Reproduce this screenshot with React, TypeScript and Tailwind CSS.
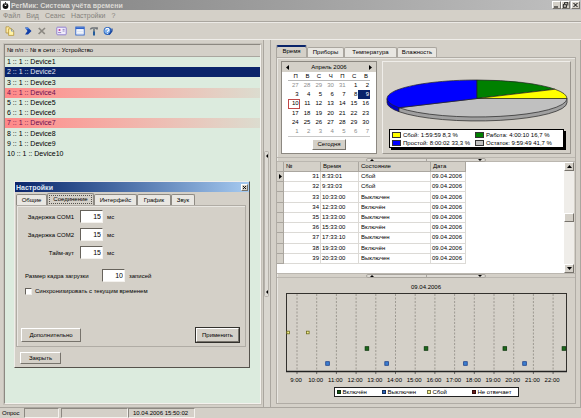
import React, { useState } from "react";

const devices = Array.from({ length: 10 }, (_, i) => i + 1);

const records = [
  [31, "8:33:01", "Сбой"],
  [32, "9:33:03", "Сбой"],
  [33, "10:33:00", "Выключен"],
  [34, "12:33:00", "Включён"],
  [35, "13:33:00", "Выключен"],
  [36, "15:33:00", "Включён"],
  [37, "17:33:10", "Выключен"],
  [38, "19:33:00", "Включён"],
  [39, "20:33:00", "Выключен"],
];

const days = [27, 28, 29, 30, 31, ...Array.from({ length: 30 }, (_, i) => i + 1), 1, 2, 3, 4, 5, 6, 7];

const raised = "border border-t-white border-l-white border-r-[#77736c] border-b-[#77736c] bg-[#d4d0c8]";
const sunken = "border border-t-[#8c8881] border-l-[#8c8881] border-r-[#f4f2ee] border-b-[#f4f2ee]";
const etched = "border border-[#b0aca5] shadow-[inset_1px_1px_0_#e9e7e2]";

function TitleBar() {
  return (
    <header className="flex h-[10px] shrink-0 items-center bg-linear-to-r from-[#808080] to-[#c0c0c0] pr-px pl-px">
      <svg className="h-[9px] w-[9px]" viewBox="0 0 9 9">
        <rect width="9" height="9" fill="#fff" />
        <circle cx="4.5" cy="5" r="2.9" fill="#111" />
        <path d="M4.5 1v4" stroke="#fff" strokeWidth="1.6" />
        <path d="M4.5 1v3" stroke="#111" strokeWidth=".8" />
      </svg>
      <h1 className="ml-px flex-1 text-[7px] leading-[9px] font-bold whitespace-nowrap text-[#dcdad5]">
        РегМик: Система учёта времени
      </h1>
      <div className="flex">
        <button aria-label="Свернуть" className={`h-[8px] w-[9px] ${raised}`}>
          <svg className="h-full w-full" viewBox="0 0 7 6"><path d="M1 5h4" stroke="#000" /></svg>
        </button>
        <button aria-label="Восстановить" className={`h-[8px] w-[9px] ${raised}`}>
          <svg className="h-full w-full" viewBox="0 0 7 6"><path d="M2.5 .7h3.5M2.5 .5v1.5M5.8 .5v3M1 2.7h3.6M1.3 2.5v3M1 5.3h3.6M4.4 2.5v3" fill="none" stroke="#000" strokeWidth=".8" /></svg>
        </button>
        <button aria-label="Закрыть окно" className={`ml-px h-[8px] w-[9px] ${raised}`}>
          <svg className="h-full w-full" viewBox="0 0 7 6"><path d="M1.5 1l4 4M5.5 1l-4 4" stroke="#000" /></svg>
        </button>
      </div>
    </header>
  );
}

function Toolbar() {
  return (
    <div className="flex h-[18px] shrink-0 items-center border-t border-t-[#aaa69f] pl-[5px] shadow-[inset_0_1px_0_#eceae6]">
      <button aria-label="Копировать">
        <svg className="h-[10px] w-[10px]" viewBox="0 0 10 10">
          <path d="M1 .8h3l2 2V7H1z" fill="#ffe9a0" stroke="#a88b35" strokeWidth=".7" />
          <path d="M3.6 2.8h3.1l2 2v4.6H3.6z" fill="#fff3a8" stroke="#b08d2a" strokeWidth=".7" />
          <path d="M6.5 2.8v2.3h2.2" fill="none" stroke="#5a7bbf" strokeWidth=".7" />
        </svg>
      </button>
      <button aria-label="Опрос" className="ml-[8px]">
        <svg className="h-[10px] w-[10px]" viewBox="0 0 10 10">
          <path d="M2 1.5h3L8.5 5 5 8.5H2L4.5 5z" fill="#123fa8" />
          <path d="M2 1.7h3L6.4 3.2H3.3z" fill="#4d86e8" />
        </svg>
      </button>
      <button aria-label="Стоп" className="ml-[4px]">
        <svg className="h-[10px] w-[10px]" viewBox="0 0 10 10">
          <path d="M1.8 2l6 6M8 2L1.6 8" stroke="#8b8882" strokeWidth="1.7" />
        </svg>
      </button>
      <button aria-label="Карточка" className="ml-[9px]">
        <svg className="h-[10px] w-[11px]" viewBox="0 0 11 10">
          <rect x=".8" y="1.2" width="9.4" height="7.6" rx=".8" fill="#f1edfb" stroke="#8a77cf" strokeWidth=".9" />
          <circle cx="3.5" cy="4" r="1.1" fill="#c23c8e" />
          <path d="M2 6.6h3.2M6.6 3.4h2M6.6 5h2" stroke="#7d71b8" strokeWidth=".8" />
        </svg>
      </button>
      <button aria-label="Окно" className="ml-[8px]">
        <svg className="h-[10px] w-[10px]" viewBox="0 0 10 10">
          <rect x=".8" y="1" width="8.4" height="8" fill="#fff" stroke="#2d62c9" strokeWidth=".9" />
          <path d="M.8 2.2h8.4" stroke="#2d62c9" strokeWidth="1.8" />
          <path d="M2.5 5.2h1M4.5 5.2h1M6.5 5.2h1M2.5 7.2h1M4.5 7.2h1M6.5 7.2h1" stroke="#8eaadf" strokeWidth=".8" />
        </svg>
      </button>
      <button aria-label="Сервис" className="ml-[4px]">
        <svg className="h-[10px] w-[10px]" viewBox="0 0 10 10">
          <path d="M.8 3.6C1.2 1.6 2.6 1 4 1.3h4.9v2.2H7.3L6.4 2.8H3.5L2 3.6z" fill="#6f7479" />
          <path d="M5 3v3" stroke="#48606e" strokeWidth="1.3" />
          <path d="M5 5.5V9.4" stroke="#245c9c" strokeWidth="2" />
        </svg>
      </button>
      <button aria-label="Справка" className="ml-[4px]">
        <svg className="h-[10px] w-[10px]" viewBox="0 0 10 10">
          <circle cx="4.6" cy="5" r="4" fill="#2660bd" />
          <circle cx="4.2" cy="4.8" r="2.9" fill="#7fb0ec" />
          <path d="M2.8 3.8c0-2 3.2-1.8 3.2-.1 0 1.1-1.5 1.1-1.5 2.2M4.5 6.9v.9" fill="none" stroke="#fff" strokeWidth="1.1" />
          <path d="M6 8.5L9 5V2.5" fill="none" stroke="#1d479b" strokeWidth="1.2" />
        </svg>
      </button>
    </div>
  );
}

function DeviceList() {
  const [selected, setSelected] = useState(2);
  return (
    <section className="flex w-[264px] shrink-0 border-r border-r-[#aaa69f] p-[4px] pr-[2px] pb-[3px]">
      <div className={`flex flex-1 flex-col bg-[#dcebde] ${sunken} shadow-[0_0_0_1px_#c4c0b8]`}>
        <div className="h-[12px] border-b border-b-[#aaa69f] bg-[#d4d0c8] pl-[2px] leading-[11px]">
          № п/п :: № в сети :: Устройство
        </div>
        <div className="flex h-[102px] flex-col">
          {devices.map((n) => (
            <button
              key={n}
              onClick={() => setSelected(n)}
              className={`flex min-h-0 flex-1 items-center pl-[2px] text-left text-[7px] leading-[10px] whitespace-nowrap ${
                n === selected
                  ? "bg-[#0a246a] text-[#e3e8f2]"
                  : n === 4 || n === 7
                    ? "bg-linear-to-r from-[#ff8888] to-[#dcdccf] text-[#6b0f50]"
                    : "text-black"
              }`}
            >
              {n} :: 1 :: Device{n}
            </button>
          ))}
        </div>
      </div>
    </section>
  );
}

function Calendar() {
  return (
    <section className="flex w-[96px] shrink-0 flex-col border border-[#8c8881] bg-white">
      <div className="flex h-[10px] items-center justify-between bg-[#d4d0c8] px-[4px] leading-[10px]">
        <button aria-label="Предыдущий месяц"><svg className="h-[5px] w-[3px]" viewBox="0 0 3 5"><path d="M3 0v5L0 2.5z" /></svg></button>
        <span>Апрель 2006</span>
        <button aria-label="Следующий месяц"><svg className="h-[5px] w-[3px]" viewBox="0 0 3 5"><path d="M0 0v5l3-2.5z" /></svg></button>
      </div>
      <div className="mx-[6px] grid h-[9px] grid-cols-7 border-b border-b-[#b9b9b9] text-right leading-[9px]">
        {["П", "В", "С", "Ч", "П", "С", "В"].map((d, i) => (
          <span key={i} className="pr-[2px]">{d}</span>
        ))}
      </div>
      <div className="mx-[6px] grid h-[56px] grid-cols-7 grid-rows-6 border-b border-b-[#c9c9c9] leading-[9px]">
        {days.map((d, i) => (
          <button
            key={i}
            className={`flex min-h-0 items-center justify-end ${
              i === 13
                ? "bg-[#0a246a] pr-px text-white"
                : i === 14
                  ? "border border-[#c04848]"
                  : i < 5 || i > 34
                    ? "pr-px text-[#8c8c8c]"
                    : "pr-px"
            }`}
          >
            {d}
          </button>
        ))}
      </div>
      <button className={`mx-auto mt-[2px] h-[11px] w-[34px] leading-[9px] ${raised}`}>Сегодня</button>
    </section>
  );
}

function PiePanel() {
  const legend: [string, string][] = [
    ["bg-[#ffff00]", "Сбой: 1:59:59 8,3 %"],
    ["bg-[#008000]", "Работа: 4:00:10 16,7 %"],
    ["bg-[#0000ff]", "Простой: 8:00:02 33,3 %"],
    ["bg-[#c0c0c0]", "Остаток: 9:59:49 41,7 %"],
  ];
  return (
    <section className="flex min-w-0 flex-1 flex-col items-center border border-t-[#efede9] border-l-[#efede9] border-r-[#9a968f] border-b-[#9a968f] pt-[16px]">
      <svg className="h-[45px] w-[182px]" viewBox="385 78 182 45">
        <g stroke="#222" strokeWidth=".7">
          <path d="M386 98.5V102.5A90 18.5 0 0 0 398 111.7V107.7z" fill="#0000c8" />
          <path d="M398 107.7V111.7A90 18.5 0 0 0 566 102.5V98.5z" fill="#a0a0a0" />
          <path d="M476 98.5L398 107.7A90 18.5 0 0 0 566 98.5z" fill="#c0c0c0" />
          <path d="M476 98.5L398 107.7A90 18.5 0 0 1 476 80z" fill="#0000ff" />
          <path d="M476 98.5V80A90 18.5 0 0 1 554 89.25z" fill="#008000" />
          <path d="M476 98.5L554 89.25A90 18.5 0 0 1 566 98.5z" fill="#ffff00" />
        </g>
      </svg>
      <ul className="mt-[6px] grid h-[19px] grid-cols-[82px_86px] content-center gap-x-px border border-black bg-white px-[2px] leading-[8px] whitespace-nowrap shadow-[2px_2px_0_#000]">
        {legend.map(([color, label]) => (
          <li key={label} className="flex items-center gap-[2px]">
            <span className={`h-[6px] w-[9px] shrink-0 border border-[#333] ${color}`} />
            {label}
          </li>
        ))}
      </ul>
    </section>
  );
}

function Splitter() {
  return (
    <div className="flex h-[5px] shrink-0 items-center border-y border-y-[#bbb7b0]">
      <div className="mx-auto flex h-[4px] w-[120px] items-center justify-between rounded-[2px] border border-[#a9a59e] bg-[#dedbd5] px-[3px]">
        <svg className="h-[2px] w-[4px]" viewBox="0 0 4 2"><path d="M0 2h4L2 0z" /></svg>
        <span className="h-[3px] w-px bg-[#a9a59e]" />
        <svg className="h-[2px] w-[4px]" viewBox="0 0 4 2"><path d="M0 0h4L2 2z" /></svg>
      </div>
    </div>
  );
}

function Records() {
  const head = "border-r border-b border-[#aaa69f] bg-[#d4d0c8] p-0 text-left font-normal";
  const cell = "border-r border-b border-[#dcdad6] p-0";
  return (
    <section className="mr-px flex h-[111px] shrink-0 bg-white">
      <div className="min-w-0 flex-1">
        <table className="h-[102px] w-[189px] table-fixed border-separate border-spacing-0 leading-[9px] whitespace-nowrap">
          <colgroup>
            <col className="w-[7px]" />
            <col className="w-[37px]" />
            <col className="w-[38px]" />
            <col className="w-[72px]" />
            <col className="w-[35px]" />
          </colgroup>
          <thead>
            <tr>
              <th className={head} aria-label="Текущая запись" />
              <th className={`${head} pl-[2px]`}>№</th>
              <th className={`${head} pl-[2px]`}>Время</th>
              <th className={`${head} pl-[2px]`}>Состояние</th>
              <th className={`${head} pl-[2px]`}>Дата</th>
            </tr>
          </thead>
          <tbody>
            {records.map(([n, time, state], i) => (
              <tr key={n}>
                <td className="border-r border-b border-[#aaa69f] bg-[#d4d0c8] p-0">
                  {i === 0 && <svg className="ml-[2px] block h-[5px] w-[3px]" viewBox="0 0 3 5"><path d="M0 0v5l3-2.5z" /></svg>}
                </td>
                <td className={`${cell} pr-px text-right`}>{n}</td>
                <td className={`${cell} pl-px`}>{time}</td>
                <td className={`${cell} pl-[2px]`}>{state}</td>
                <td className={`${cell} pl-px`}>09.04.2006</td>
              </tr>
            ))}
          </tbody>
        </table>
      </div>
      <div className="flex w-[10px] flex-col bg-[#efede9]">
        <button aria-label="Вверх" className={`flex h-[9px] items-center justify-center ${raised}`}>
          <svg className="h-[3px] w-[5px]" viewBox="0 0 5 3"><path d="M0 3h5L2.5 0z" /></svg>
        </button>
        <div className="flex flex-1 flex-col pt-[42px]"><div className={`h-[9px] ${raised}`} /></div>
        <button aria-label="Вниз" className={`flex h-[9px] items-center justify-center ${raised}`}>
          <svg className="h-[3px] w-[5px]" viewBox="0 0 5 3"><path d="M0 0h5L2.5 3z" /></svg>
        </button>
      </div>
    </section>
  );
}

const hourX = (h: number) => 20 + (h - 9) * 19.7;

function TimeChart() {
  const hours = Array.from({ length: 14 }, (_, i) => i + 9);
  const points: [number, number, string, string][] = [
    [8.55, 54.5, "#f4f08c", "#6d6a1c"],
    [9.55, 54.5, "#f4f08c", "#6d6a1c"],
    [12.55, 70.5, "#1c6a1c", "#0a360a"],
    [15.55, 70.5, "#1c6a1c", "#0a360a"],
    [19.55, 70.5, "#1c6a1c", "#0a360a"],
    [22.55, 70.5, "#1c6a1c", "#0a360a"],
    [10.55, 85.5, "#3c7fd0", "#1c3f8c"],
    [13.55, 85.5, "#3c7fd0", "#1c3f8c"],
    [17.55, 85.5, "#3c7fd0", "#1c3f8c"],
    [20.55, 85.5, "#3c7fd0", "#1c3f8c"],
  ];
  const legend: [string, string, string][] = [
    ["bg-[#145214]", "Включён", "w-[45px]"],
    ["bg-[#2c62b8]", "Выключен", "w-[45px]"],
    ["bg-[#f4f08c]", "Сбой", "w-[45px]"],
    ["bg-[#6a1c1c]", "Не отвечает", "w-[46px]"],
  ];
  return (
    <section className="flex min-h-0 flex-1 flex-col items-center">
      <svg className="w-full" viewBox="0 0 298 107" fontSize="6" textAnchor="middle">
        <text x="149" y="11">09.04.2006</text>
        {hours.map((h) => (
          <g key={h}>
            <path d={`M${hourX(h)} 16V93`} stroke="#8f8b84" strokeWidth=".8" strokeDasharray="2 1.5" />
            <path d={`M${hourX(h)} 93v3`} stroke="#333" strokeWidth=".7" />
            <text x={hourX(h) - 1} y="103.5">{h}:00</text>
          </g>
        ))}
        <rect x="9.5" y="15.5" width="280" height="78" fill="none" stroke="#33312d" />
        <path d="M9 93.5h281" stroke="#222" strokeWidth="1.3" />
        {points.map(([h, y, fill, stroke]) => {
          const size = fill === "#f4f08c" ? 2.6 : 3.6;
          return <rect key={h} x={hourX(h) - size / 2} y={y - size / 2} width={size} height={size} fill={fill} stroke={stroke} strokeWidth=".8" />;
        })}
      </svg>
      <ul className="mt-[2px] flex h-[10px] items-center border border-[#222] bg-white pl-[2px] leading-[8px] whitespace-nowrap">
        {legend.map(([color, label, width]) => (
          <li key={label} className={`flex items-center gap-[2px] ${width}`}>
            <span className={`h-[4px] w-[4px] shrink-0 border border-black/50 ${color}`} />
            {label}
          </li>
        ))}
      </ul>
    </section>
  );
}

function Workspace() {
  const tabs: [string, string][] = [
    ["Время", "w-[31px]"],
    ["Приборы", "w-[37px]"],
    ["Температура", "w-[53px]"],
    ["Влажность", "w-[40px]"],
  ];
  return (
    <main className="flex min-w-0 flex-1 flex-col border-x border-x-[#aaa69f] pt-[5px] pr-[4px] pb-[3px] pl-[5px]">
      <nav className="flex h-[12px] shrink-0 items-end leading-[9px]">
        {tabs.map(([label, width], i) => (
          <button
            key={label}
            className={`${width} rounded-t-[2px] border border-b-0 border-[#aaa69f] ${
              i === 0 ? "h-[12px] border-t-[#0a246a] bg-[#d4d0c8] shadow-[inset_0_1px_0_#0a246a]" : "h-[10px] bg-[#e9e7e2]"
            }`}
          >
            {label}
          </button>
        ))}
      </nav>
      <div className={`flex min-h-0 flex-1 flex-col ${etched}`}>
        <div className="flex h-[99px] shrink-0 gap-[5px] px-[4px] py-[3px]">
          <Calendar />
          <PiePanel />
        </div>
        <Splitter />
        <Records />
        <Splitter />
        <TimeChart />
      </div>
    </main>
  );
}

function SettingsDialog() {
  const tabs: [string, string][] = [
    ["Общие", "w-[31px]"],
    ["Соединение", "w-[47px]"],
    ["Интерфейс", "w-[43px]"],
    ["График", "w-[34px]"],
    ["Звук", "w-[24px]"],
  ];
  const fields: [string, string][] = [
    ["com1", "Задержка COM1"],
    ["com2", "Задержка COM2"],
    ["timeout", "Тайм-аут"],
  ];
  const input = `h-[13px] w-[23px] border border-t-[#66625b] border-l-[#66625b] border-r-[#f4f2ee] border-b-[#f4f2ee] bg-white pr-px text-right text-[7px] leading-[10px]`;
  return (
    <div
      role="dialog"
      aria-labelledby="settings-title"
      className="absolute top-[181px] left-[14px] flex w-[236px] flex-col border border-t-[#efede9] border-l-[#efede9] border-r-[#55524c] border-b-[#55524c] bg-[#d4d0c8] pb-[3px]"
    >
      <div className="flex h-[10px] items-center justify-between bg-linear-to-r from-[#0a246a] to-[#a6caf0] pr-px pl-px">
        <h2 id="settings-title" className="text-[7px] leading-[9px] font-bold text-[#dfe6f4]">Настройки</h2>
        <button aria-label="Закрыть настройки" className={`h-[7px] w-[7px] ${raised}`}>
          <svg className="h-full w-full" viewBox="0 0 5 5"><path d="M1 1l3 3M4 1L1 4" stroke="#000" strokeWidth=".9" /></svg>
        </button>
      </div>
      <nav className="mt-px ml-px flex h-[12px] items-end leading-[10px]">
        {tabs.map(([label, width], i) => (
          <button
            key={label}
            className={`${width} rounded-t-[2px] border border-b-0 border-[#8f8b84] ${
              i === 1 ? "h-[12px] bg-[#d4d0c8] p-px" : "h-[11px] bg-[#e9e7e2]"
            }`}
          >
            {i === 1 ? <span className="block border border-dotted border-[#55524c] leading-[7px]">{label}</span> : label}
          </button>
        ))}
      </nav>
      <form className={`mx-px mr-[3px] flex h-[142px] flex-col leading-[10px] ${etched}`} onSubmit={(e) => e.preventDefault()}>
        <div className="mt-[4px] flex flex-col gap-[5px]">
          {fields.map(([id, label]) => (
            <div key={id} className="flex items-center">
              <label htmlFor={id} className="w-[57px] text-right whitespace-nowrap">{label}</label>
              <input id={id} defaultValue="15" className={`ml-[6px] ${input}`} />
              <span className="ml-[4px]">мс</span>
            </div>
          ))}
        </div>
        <div className="mt-[10px] flex items-center pl-[8px]">
          <label htmlFor="frame" className="w-[72px] whitespace-nowrap">Размер кадра загрузки</label>
          <input id="frame" defaultValue="10" className={`ml-[5px] ${input}`} />
          <span className="ml-[4px]">записей</span>
        </div>
        <label className="mt-[4px] flex items-center gap-[3px] pl-[8px]">
          <input type="checkbox" className="h-[7px] w-[7px] appearance-none border border-t-[#66625b] border-l-[#66625b] border-r-[#efede9] border-b-[#efede9] bg-white" />
          Синхронизировать с текущим временем
        </label>
        <div className="mt-auto mb-[4px] flex justify-between pr-[6px] pl-[4px]">
          <button type="button" className={`h-[14px] w-[60px] ${raised}`}>Дополнительно</button>
          <button type="submit" className={`h-[14px] w-[43px] outline outline-[#33312d] ${raised}`}>Применить</button>
        </div>
      </form>
      <button className={`mt-[5px] ml-[5px] h-[12px] w-[41px] leading-[9px] ${raised}`}>Закрыть</button>
    </div>
  );
}

export default function App() {
  return (
    <div className="relative flex h-screen min-h-[418px] flex-col overflow-hidden bg-[#d4d0c8] font-['Liberation_Sans',Arial,sans-serif] text-[6px] text-black">
      <TitleBar />
      <nav className="flex h-[11px] shrink-0 items-center gap-[6px] pl-[3px] text-[7px] leading-[10px] text-[#85827c]">
        {["Файл", "Вид", "Сеанс", "Настройки", "?"].map((m) => (
          <button key={m}>{m}</button>
        ))}
      </nav>
      <Toolbar />
      <div className="flex min-h-0 flex-1 border-t border-t-[#efede9]">
        <DeviceList />
        <div className="flex w-[6px] items-center bg-[#d9d6cf]">
          <svg className="h-[146px] w-[5px]" viewBox="0 0 5 146">
            <rect x=".5" y=".5" width="4" height="145" rx="1" fill="#dedbd5" stroke="#b5b1aa" />
            <path d="M4 3v4L2 5zM4 139v4l-2-2z" />
          </svg>
        </div>
        <Workspace />
      </div>
      <footer className="flex h-[11px] shrink-0 border-t border-t-[#aaa69f] pl-[2px] leading-[10px]">
        <span className="w-[22px]">Опрос</span>
        <span className={`w-[35px] ${sunken}`} />
        <span className={`ml-[2px] w-[67px] ${sunken}`} />
        <span className={`w-[67px] pl-[4px] leading-[9px] whitespace-nowrap ${sunken}`}>10.04.2006 15:50:02</span>
      </footer>
      <SettingsDialog />
    </div>
  );
}
